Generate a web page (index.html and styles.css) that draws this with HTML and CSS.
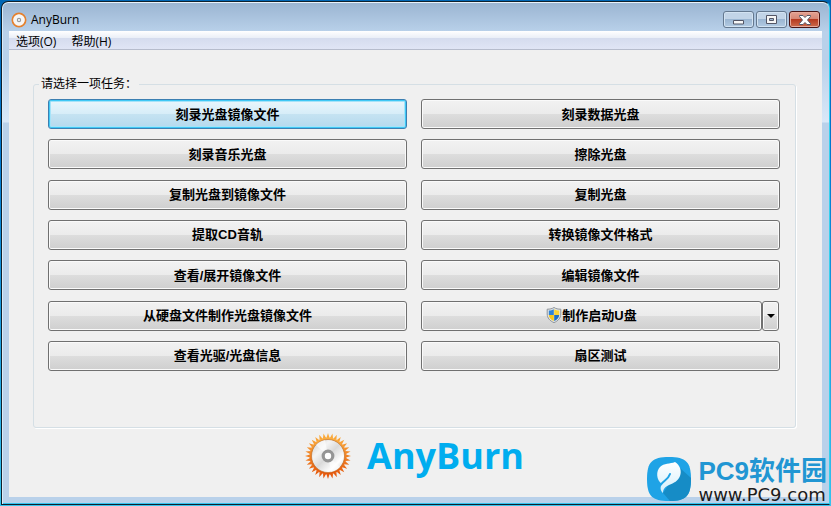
FILE: index.html
```html
<!DOCTYPE html>
<html lang="zh-CN">
<head>
    <meta charset="UTF-8">
    <meta name="viewport" content="width=device-width, initial-scale=1.0">
    <title>AnyBurn</title>
    <link rel="stylesheet" href="styles.css">
</head>
<body>
    <svg class="defs" width="0" height="0" aria-hidden="true">
        <defs>
            <linearGradient id="flame" x1="0" y1="0" x2="0" y2="1">
                <stop offset="0" stop-color="#fbb040"/>
                <stop offset="1" stop-color="#e4540a"/>
            </linearGradient>
            <linearGradient id="disc" x1="0" y1="0" x2="1" y2="1">
                <stop offset="0" stop-color="#c9c9c9"/>
                <stop offset="0.3" stop-color="#f4f4f4"/>
                <stop offset="0.5" stop-color="#dadada"/>
                <stop offset="0.75" stop-color="#ffffff"/>
                <stop offset="1" stop-color="#c4c4c4"/>
            </linearGradient>
            <linearGradient id="leaf" x1="0" y1="0" x2="0" y2="1">
                <stop offset="0" stop-color="#ffffff"/>
                <stop offset="1" stop-color="#d3effc"/>
            </linearGradient>
        </defs>
    </svg>

    <div class="window">
        <header class="titlebar">
            <svg class="app-icon" viewBox="0 0 16 16">
                <circle cx="8" cy="8" r="6.600" fill="#f7eadd" stroke="#e5802d" stroke-width="1.8"/>
                <circle cx="8" cy="8" r="5.600" fill="#f6f6f6"/>
                <circle cx="8" cy="8" r="1.600" fill="#fff" stroke="#9a9a9a" stroke-width="1.2"/>
            </svg>
            <h1>AnyBurn</h1>
            <div class="controls">
                <button type="button" aria-label="最小化">
                    <svg width="12" height="12" viewBox="0 0 12 12"><path d="M.5 6.500h10v3.500h-10z" fill="#f6f6f6" stroke="#535666" stroke-linejoin="round"/></svg>
                </button>
                <button type="button" aria-label="最大化">
                    <svg width="12" height="12" viewBox="0 0 12 12"><path d="M.5 1.500h10v8h-10zM3.500 4.500v2h4v-2z" fill="#f6f6f6" fill-rule="evenodd" stroke="#535666" stroke-linejoin="round"/></svg>
                </button>
                <button type="button" class="close" aria-label="关闭">
                    <svg width="12" height="12" viewBox="0 0 12 12"><path d="M.5 1.500h3.500l2 2 2-2h3.500v1L8.500 6l3 3.500v1H8l-2-2-2 2H.5v-1L3.500 6l-3-3.500z" fill="#fff" stroke="#535666"/></svg>
                </button>
            </div>
        </header>

        <div class="client">
            <nav class="menu">
                <button type="button">选项(O)</button>
                <button type="button">帮助(H)</button>
            </nav>

            <main>
                <fieldset>
                    <legend>请选择一项任务：</legend>
                    <div class="tasks">
                        <button type="button" class="task selected">刻录光盘镜像文件</button>
                        <button type="button" class="task">刻录数据光盘</button>
                        <button type="button" class="task">刻录音乐光盘</button>
                        <button type="button" class="task">擦除光盘</button>
                        <button type="button" class="task">复制光盘到镜像文件</button>
                        <button type="button" class="task">复制光盘</button>
                        <button type="button" class="task">提取CD音轨</button>
                        <button type="button" class="task">转换镜像文件格式</button>
                        <button type="button" class="task">查看/展开镜像文件</button>
                        <button type="button" class="task">编辑镜像文件</button>
                        <button type="button" class="task">从硬盘文件制作光盘镜像文件</button>
                        <div class="split">
                            <button type="button" class="task">
                                <svg class="shield" viewBox="0 0 16 16">
                                    <path d="M8 .5C6 1.800 4 2.200 1.200 2.200V7c0 4 2.800 7 6.800 8.600C12 14 14.800 11 14.800 7V2.200C12 2.200 10 1.800 8 .5z" fill="#e4e7ea" stroke="#8c9399"/>
                                    <path d="M7.800 2.300C6.300 3.100 4.800 3.500 2.800 3.600V8h5z" fill="#2f83d6"/>
                                    <path d="M8.200 2.300c1.500.8 3 1.200 5 1.300V8h-5z" fill="#fbd537"/>
                                    <path d="M2.800 8h5v6C4.800 12.700 3 10.800 2.800 8z" fill="#f8c81c"/>
                                    <path d="M13.200 8h-5v6c3-1.300 4.800-3.200 5-6z" fill="#1f6fc6"/>
                                </svg>
                                制作启动U盘
                            </button>
                            <button type="button" class="task arrow" aria-label="更多选项">
                                <svg width="8" height="4" viewBox="0 0 8 4"><path d="M0 0h8L4 4z"/></svg>
                            </button>
                        </div>
                        <button type="button" class="task">查看光驱/光盘信息</button>
                        <button type="button" class="task">扇区测试</button>
                    </div>
                </fieldset>

                <div class="brand">
                    <svg class="brand-icon" viewBox="0 0 46 46">
                        <g id="rays" fill="url(#flame)"></g>
                        <circle cx="23" cy="23" r="18.500" fill="url(#flame)"/>
                        <circle cx="23" cy="23" r="16.500" fill="url(#disc)" stroke="#b9651d" stroke-width="0.6"/>
                        <path d="M23 23L11 12A16.200 16.200 0 0 1 20 7.100z" fill="#fff" opacity="0.6"/>
                        <path d="M23 23L35 34A16.200 16.200 0 0 1 26 38.900z" fill="#fff" opacity="0.6"/>
                        <circle cx="23" cy="23" r="4.800" fill="#fff" stroke="#959595" stroke-width="3.200"/>
                    </svg>
                    <span>AnyBurn</span>
                </div>
            </main>
        </div>
    </div>

    <div class="watermark">
        <svg width="46" height="46" viewBox="0 0 46 46">
            <path d="M23 1C40 1 45 6 45 23S40 45 23 45 1 40 1 23 6 1 23 1z" fill="#1fa3e6"/>
            <path d="M34 12L45 22C45 40 40 45 24 45L17 37z" fill="#168cc6"/>
            <path d="M17 37C14 34 14 31 16 28 10 24 10 15 14 11 18 7 24 8 29 6c5 3 7 9 5 14-2 5-6 7-11 9-4 2-6 4-6 8z" fill="url(#leaf)"/>
            <path d="M15 28.500C18 24 22 24 24 18" fill="none" stroke="#1fa3e6" stroke-width="2" stroke-linecap="round"/>
        </svg>
        <div class="watermark-text">
            <strong>PC9软件园</strong>
            <span>www.PC9.com</span>
        </div>
    </div>

    <script>
        // flames around the brand disc
        const rays = document.getElementById('rays');
        const count = 32;
        let d = '';

        for (let i = 0; i < count; i++) {
            const angle = i * 2 * Math.PI / count;
            const point = (r, a) => (23 + r * Math.cos(a)).toFixed(2) + ' ' + (23 + r * Math.sin(a)).toFixed(2);
            d += 'M' + point(18, angle - 0.09) + 'L' + point(23, angle) + 'L' + point(18, angle + 0.09) + 'z';
        }

        const path = document.createElementNS('http://www.w3.org/2000/svg', 'path');
        path.setAttribute('d', d);
        rays.appendChild(path);
    </script>
</body>
</html>
```

FILE: styles.css
```css
:root {
    --frame: #b9d1ea;
    --face: #f0f0f0;
    --group-line: #d5dfe5;
    --brand-color: #00adef;
    --ui-font: "Open Sans", "Noto Sans CJK SC", sans-serif;
}

* {
    box-sizing: border-box;
}

body {
    margin: 0;
    min-height: 100vh;
    padding: 1px;
    display: flex;
    background: linear-gradient(#0066b5, #0078d0 30%, #35c3ee);
    font-family: var(--ui-font);
    font-size: 12px;
    color: #000;
}

button {
    font-family: inherit;
    color: inherit;
}

.defs {
    position: absolute;
}

.window {
    flex: 1;
    display: flex;
    flex-direction: column;
    padding: 0 7px 7px;
    border: 1px solid #10202c;
    border-right-color: #35d0ee;
    border-radius: 7px 7px 0 0;
    background: linear-gradient(#9ab4d1, #b9d1ea 30px, #b9d1ea 60px, #d9e8f8 120px, var(--frame) 121px);
    box-shadow: inset 0 1px #e9f2fa, inset 1px 0 #d9ecfa, inset 0 -1px #35c3ee;
}

.titlebar {
    display: flex;
    align-items: center;
    height: 29px;
    padding: 6px 2px 0;
}

.app-icon {
    width: 16px;
    height: 16px;
    margin-right: 4px;
}

.titlebar h1 {
    flex: 1;
    margin: 0;
    font-size: 12px;
    font-weight: normal;
}

.controls {
    display: flex;
    gap: 2px;
}

.controls button {
    display: flex;
    align-items: center;
    justify-content: center;
    width: 31px;
    height: 17px;
    padding: 0;
    border: 1px solid #64788f;
    border-radius: 3px;
    background: linear-gradient(#c2d4e7 50%, #9bb6d2 50%, #b3cbe3);
    box-shadow: inset 0 0 0 1px #d3e3f2;
}

.controls .close {
    border-color: #4a1414;
    background: linear-gradient(#e4a293, #d58472 50%, #b63a20 50%, #cc6b4c);
    box-shadow: inset 0 0 0 1px #e6aa9c;
}

.client {
    flex: 1;
    display: flex;
    flex-direction: column;
    background: var(--face);
}

.menu {
    display: flex;
    gap: 1px;
    height: 19px;
    border-bottom: 1px solid #b6bccc;
    background: linear-gradient(#fff, #e9eef7 40%, #d5dcee 41%, #e0e5f5);
}

.menu button {
    padding: 2px 7px 0;
    border: none;
    background: none;
    font-size: 12px;
    line-height: 18px;
}

main {
    flex: 1;
    padding: 26px 26px 0 24px;
}

fieldset {
    min-width: 0;
    margin: 0;
    padding: 7px 15px 56px 14px;
    border: 1px solid var(--group-line);
    border-radius: 3px;
    box-shadow: 1px 1px #fff;
}

legend {
    margin-left: -9px;
    padding: 0 2px;
    font-size: 12px;
    line-height: 16px;
}

.tasks {
    display: grid;
    grid-template-columns: 1fr 1fr;
    column-gap: 14px;
    align-content: space-between;
    min-height: 272px;
}

.task {
    display: flex;
    align-items: center;
    justify-content: center;
    height: 30px;
    padding: 0 0 2px;
    border: 1px solid #707070;
    border-radius: 3px;
    background: linear-gradient(#f2f2f2, #ebebeb 50%, #dddddd 50%, #cfcfcf);
    box-shadow: inset 0 0 0 1px #fafafa;
    font-family: "Liberation Sans", "Noto Sans CJK SC", sans-serif;
    font-size: 13px;
    font-weight: bold;
}

.task.selected {
    border-color: #3c7fb1;
    background: linear-gradient(#eaf6fc, #d6edf8 50%, #c5e3f2 50%, #b4d9ed);
    box-shadow: inset 0 0 0 1px #3fc8f5, inset 0 0 0 2px #a5e3f9;
}

.split {
    display: flex;
}

.split .task {
    flex: 1;
}

.split .task.arrow {
    flex: none;
    width: 17px;
    margin-right: 1px;
    padding: 0;
}

.shield {
    width: 16px;
    height: 16px;
}

.brand {
    display: flex;
    align-items: center;
    justify-content: center;
    gap: 16px;
    margin-top: 5px;
    color: var(--brand-color);
    font-size: 36px;
    font-weight: bold;
    line-height: 44px;
}

.brand-icon {
    width: 46px;
    height: 46px;
}

/* site mark, lies over the bottom right corner of the window */
.watermark {
    position: absolute;
    right: 4px;
    bottom: 2px;
    display: flex;
    gap: 6px;
}

.watermark-text {
    display: flex;
    flex-direction: column;
}

.watermark strong {
    color: #2196d3;
    font-family: "Liberation Sans", "Noto Sans CJK SC", sans-serif;
    font-size: 26px;
    line-height: 30px;
}

.watermark span {
    color: #1c1c1c;
    font-family: "DejaVu Sans", sans-serif;
    font-size: 18px;
    line-height: 18px;
}
```
